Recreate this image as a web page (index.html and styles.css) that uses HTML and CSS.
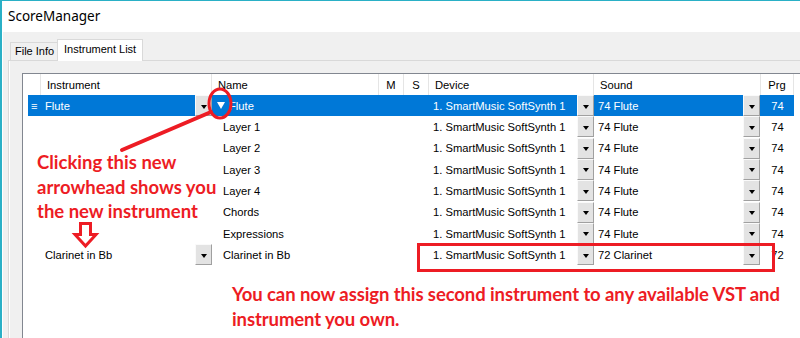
FILE: index.html
```html
<!DOCTYPE html>
<html lang="en">
<head>
    <meta charset="UTF-8">
    <title>ScoreManager</title>
    <link rel="stylesheet" href="styles.css">
</head>
<body>

<div class="window">
    <div class="titlebar">ScoreManager</div>
    <div class="client">
        <div class="tabs">
            <div class="tab">File Info</div>
            <div class="tab active">Instrument List</div>
        </div>
        <div class="panel">
            <div class="grid">
                <div class="row head">
                    <div class="c"></div>
                    <div class="c">Instrument</div>
                    <div class="c">Name</div>
                    <div class="c mid">M</div>
                    <div class="c mid">S</div>
                    <div class="c">Device</div>
                    <div class="c">Sound</div>
                    <div class="c mid">Prg</div>
                    <div class="c last"></div>
                </div>

                <div class="row selected">
                    <div class="c grip">&#8801;</div>
                    <div class="c inst">Flute<span class="dd"></span></div>
                    <div class="c name open"><span class="expand"></span>Flute</div>
                    <div class="c"></div>
                    <div class="c"></div>
                    <div class="c dev">1. SmartMusic SoftSynth 1<span class="dd"></span></div>
                    <div class="c snd">74 Flute<span class="dd"></span></div>
                    <div class="c mid">74</div>
                    <div class="c"></div>
                </div>

                <div class="row">
                    <div class="c"></div>
                    <div class="c inst"></div>
                    <div class="c name">Layer 1</div>
                    <div class="c"></div>
                    <div class="c"></div>
                    <div class="c dev">1. SmartMusic SoftSynth 1<span class="dd"></span></div>
                    <div class="c snd">74 Flute<span class="dd"></span></div>
                    <div class="c mid">74</div>
                    <div class="c"></div>
                </div>

                <div class="row">
                    <div class="c"></div>
                    <div class="c inst"></div>
                    <div class="c name">Layer 2</div>
                    <div class="c"></div>
                    <div class="c"></div>
                    <div class="c dev">1. SmartMusic SoftSynth 1<span class="dd"></span></div>
                    <div class="c snd">74 Flute<span class="dd"></span></div>
                    <div class="c mid">74</div>
                    <div class="c"></div>
                </div>

                <div class="row">
                    <div class="c"></div>
                    <div class="c inst"></div>
                    <div class="c name">Layer 3</div>
                    <div class="c"></div>
                    <div class="c"></div>
                    <div class="c dev">1. SmartMusic SoftSynth 1<span class="dd"></span></div>
                    <div class="c snd">74 Flute<span class="dd"></span></div>
                    <div class="c mid">74</div>
                    <div class="c"></div>
                </div>

                <div class="row">
                    <div class="c"></div>
                    <div class="c inst"></div>
                    <div class="c name">Layer 4</div>
                    <div class="c"></div>
                    <div class="c"></div>
                    <div class="c dev">1. SmartMusic SoftSynth 1<span class="dd"></span></div>
                    <div class="c snd">74 Flute<span class="dd"></span></div>
                    <div class="c mid">74</div>
                    <div class="c"></div>
                </div>

                <div class="row">
                    <div class="c"></div>
                    <div class="c inst"></div>
                    <div class="c name">Chords</div>
                    <div class="c"></div>
                    <div class="c"></div>
                    <div class="c dev">1. SmartMusic SoftSynth 1<span class="dd"></span></div>
                    <div class="c snd">74 Flute<span class="dd"></span></div>
                    <div class="c mid">74</div>
                    <div class="c"></div>
                </div>

                <div class="row">
                    <div class="c"></div>
                    <div class="c inst"></div>
                    <div class="c name">Expressions</div>
                    <div class="c"></div>
                    <div class="c"></div>
                    <div class="c dev">1. SmartMusic SoftSynth 1<span class="dd"></span></div>
                    <div class="c snd">74 Flute<span class="dd"></span></div>
                    <div class="c mid">74</div>
                    <div class="c"></div>
                </div>

                <div class="row">
                    <div class="c"></div>
                    <div class="c inst">Clarinet in Bb<span class="dd"></span></div>
                    <div class="c name">Clarinet in Bb</div>
                    <div class="c"></div>
                    <div class="c"></div>
                    <div class="c dev">1. SmartMusic SoftSynth 1<span class="dd"></span></div>
                    <div class="c snd">72 Clarinet<span class="dd"></span></div>
                    <div class="c mid">72</div>
                    <div class="c"></div>
                </div>
            </div>
        </div>
    </div>
</div>

<!-- annotations drawn over the screenshot -->
<svg class="marks" width="800" height="338" viewBox="0 0 800 338">
    <ellipse cx="220" cy="103.5" rx="11" ry="14.5" fill="none" stroke="#ed1c24" stroke-width="3"/>
    <line x1="211" y1="112" x2="122" y2="150" stroke="#ed1c24" stroke-width="4" stroke-linecap="round"/>
    <polygon points="80.5,223.5 90.5,223.5 90.5,234.5 96,234.5 85.5,246 75,234.5 80.5,234.5" fill="#fff" stroke="#ed1c24" stroke-width="3" stroke-linejoin="miter"/>
    <rect x="418.5" y="244.5" width="355" height="26" fill="none" stroke="#ed1c24" stroke-width="3"/>
</svg>

<p class="note note-left">Clicking this new<br>arrowhead shows you<br>the new instrument</p>
<p class="note note-bottom">You can now assign this second instrument to any available VST and<br>instrument you own.</p>

</body>
</html>
```

FILE: styles.css
```css
body {
    margin: 0;
    width: 800px;
    height: 338px;
    overflow: hidden;
    position: relative;
    background: #fff;
    font-family: "Liberation Sans", Arial, sans-serif;
    color: #000;
}

.window {
    height: 338px;
    box-sizing: border-box;
    border-top: 1px solid #2ab0c6;
    border-left: 2px solid #2ab0c6;
    display: flex;
    flex-direction: column;
    overflow: hidden;
}

.titlebar {
    height: 31px;
    line-height: 31px;
    padding-left: 6px;
    font-family: "Noto Sans", sans-serif;
    font-size: 13.5px;
    flex: none;
}

.client {
    flex: 1;
    background: #f0f0f0;
    border-left: 1px solid #fff;
    display: flex;
    flex-direction: column;
}

.tabs {
    display: flex;
    align-items: flex-end;
    margin: 7px 0 0 7px;
    font-size: 11px;
}

.tab {
    height: 17px;
    line-height: 17px;
    padding: 0 0 0 4px;
    width: 42px;
    border: 1px solid #d9d9d9;
    border-bottom: none;
    background: #f0f0f0;
}

.tab.active {
    height: 21px;
    line-height: 19px;
    width: 78px;
    padding-left: 6px;
    margin-left: -1px;
    margin-bottom: -1px;
    background: #fff;
    position: relative;
}

.panel {
    flex: 1;
    margin-left: 5px;
    border-top: 1px solid #d9d9d9;
    border-left: 1px solid #d9d9d9;
    box-shadow: inset 1px 0 0 #fff;
    padding: 12px 0 0 13px;
    display: flex;
}

.grid {
    flex: 1;
    background: #fff;
    border-top: 1px solid #828790;
    border-left: 1px solid #828790;
    font-size: 11.2px;
}

.row {
    display: grid;
    grid-template-columns: 18px 171px 167px 25px 25px 165px 167px 33px 1fr;
    height: 21.33px;
}

.row.head {
    height: 21px;
}

.c {
    display: flex;
    align-items: center;
    white-space: nowrap;
    overflow: hidden;
}

.head .c {
    padding-left: 6px;
    border-right: 1px solid #e5e5e5;
}

.head .c.mid {
    padding-left: 0;
}

.head .c.last {
    border-right: none;
}

.c.mid {
    justify-content: center;
}

.selected {
    background: linear-gradient(90deg, #fff 5px, #0078d7 5px 771px, #fff 771px);
    color: #fff;
}

.grip {
    padding-left: 8px;
    font-size: 11px;
}

.inst {
    padding-left: 4px;
}

.name {
    padding-left: 11px;
}

.name.open {
    padding-left: 5px;
}

.expand {
    width: 0;
    height: 0;
    border-left: 4px solid transparent;
    border-right: 4px solid transparent;
    border-top: 7px solid #fff;
    margin-right: 4px;
}

.dev,
.snd {
    padding-left: 4px;
}

.snd .dd {
    margin-right: 1px;
}

.dd {
    margin-left: auto;
    align-self: flex-start;
    flex: none;
    width: 15px;
    height: 19px;
    box-sizing: content-box;
    background: #e3e3e3;
    border: 1px solid;
    border-color: #fafafa #a0a0a0 #a0a0a0 #fafafa;
    display: flex;
    align-items: center;
    justify-content: center;
}

.dd::after {
    content: "";
    width: 0;
    height: 0;
    margin-top: 2px;
    border-left: 3.5px solid transparent;
    border-right: 3.5px solid transparent;
    border-top: 4px solid #000;
}

.marks {
    position: absolute;
    left: 0;
    top: 0;
    pointer-events: none;
}

.note {
    position: absolute;
    margin: 0;
    color: #ed1c24;
    font-family: Lato, "Open Sans", sans-serif;
    font-weight: bold;
    font-size: 18.5px;
    line-height: 24.5px;
    white-space: nowrap;
}

.note-left {
    left: 37px;
    top: 150px;
}

.note-bottom {
    left: 232px;
    top: 282px;
    letter-spacing: -0.1px;
}
```
